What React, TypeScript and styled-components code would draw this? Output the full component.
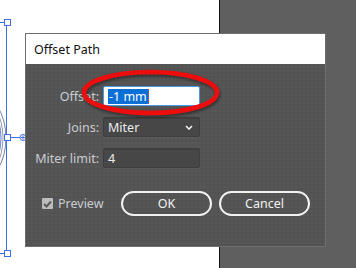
import React from "react";
import styled, { createGlobalStyle } from "styled-components";

const Global = createGlobalStyle`
  html, body { margin: 0; padding: 0; }
  body { width: 356px; height: 268px; overflow: hidden; font-family: "Noto Sans", "Liberation Sans", sans-serif; }
`;

const Stage = styled.div`
  position: relative;
  width: 356px;
  height: 268px;
  display: grid;
  grid-template-columns: 219px 1px 1fr;
  overflow: hidden;
`;

const Artboard = styled.div`
  background: #ffffff;
`;
const ArtEdge = styled.div`
  background: #111111;
`;
const Pasteboard = styled.div`
  background: #5f5f5f;
`;

const Art = styled.svg`
  position: absolute;
  left: 0;
  top: 0;
`;

const Dialog = styled.div`
  position: absolute;
  left: 25px;
  top: 33px;
  width: 299px;
  height: 212px;
  border: 1px solid #6e6e6e;
  display: flex;
  flex-direction: column;
`;

const TitleBar = styled.div`
  height: 30px;
  background: #ffffff;
  color: #111;
  font-size: 12.5px;
  display: flex;
  align-items: center;
  padding: 0 0 0 8px;
  border-bottom: 1px solid #555;
`;

const Body = styled.div`
  flex: 1;
  background-color: #535353;
  background-image: radial-gradient(circle, #595959 0.7px, transparent 0.8px);
  background-size: 4px 4px;
  display: flex;
  flex-direction: column;
  padding: 21px 15px 0 16px;
`;

const Form = styled.div`
  display: grid;
  grid-template-columns: 57px 97px;
  grid-auto-rows: 20px;
  column-gap: 4px;
  row-gap: 11px;
  align-items: center;
`;

const Label = styled.label`
  justify-self: end;
  color: #c9ccd2;
  font-size: 12.5px;
  white-space: nowrap;
`;

const Field = styled.div<{ $focused?: boolean }>`
  height: 20px;
  box-sizing: border-box;
  display: flex;
  align-items: center;
  justify-content: space-between;
  padding: 0 6px 0 4px;
  font-size: 12.5px;
  color: #ececec;
  background: ${(p) => (p.$focused ? "#ffffff" : "#474747")};
  border: 1px solid ${(p) => (p.$focused ? "#4a98e8" : "#3e3e3e")};
  border-radius: 2px;
  box-shadow: ${(p) => (p.$focused ? "none" : "inset 0 1px 0 #3f3f3f, 0 1px 0 #5a5a5a")};
`;

const Selected = styled.span`
  background: #0a6fd6;
  color: #ffffff;
  padding: 0 1px;
  line-height: 15px;
  border-right: 1px dotted #ff3b3b;
`;

const Footer = styled.div`
  margin-top: 23px;
  display: flex;
  align-items: center;
`;

const Check = styled.label`
  display: flex;
  align-items: center;
  gap: 5px;
  color: #c9ccd2;
  font-size: 12.5px;
`;

const Box = styled.span`
  width: 11px;
  height: 11px;
  border-radius: 1px;
  background: #bdbdbd;
  display: inline-flex;
  align-items: center;
  justify-content: center;
`;

const Buttons = styled.div`
  display: flex;
  gap: 7px;
  margin-left: auto;
`;

const Button = styled.button`
  width: 91px;
  height: 25px;
  border-radius: 13px;
  border: 2px solid #f2f2f2;
  background: transparent;
  color: #f2f2f2;
  font-family: "Noto Sans", "Liberation Sans", sans-serif;
  font-size: 12.5px;
  padding: 0;
`;

const Mark = styled.svg`
  position: absolute;
  left: 0;
  top: 0;
  pointer-events: none;
`;

export default function App() {
  return (
    <>
      <Global />
      <Stage>
        <Artboard />
        <ArtEdge />
        <Pasteboard />
        <Art width="60" height="268" viewBox="0 0 60 268">
          <g fill="none" strokeWidth="1">
            <ellipse cx="-22" cy="138" rx="28" ry="44" stroke="#7080b0" />
            <ellipse cx="-22" cy="138" rx="25" ry="41" stroke="#9a9aa4" />
            <ellipse cx="-22" cy="138" rx="23" ry="38" stroke="#5d7bd8" />
          </g>
          <g stroke="#3d6fe8" strokeWidth="1" fill="none">
            <line x1="6.5" y1="22" x2="6.5" y2="253" />
            <line x1="0" y1="22.5" x2="5" y2="22.5" />
            <line x1="10" y1="137.5" x2="20" y2="137.5" />
            <line x1="0" y1="253.5" x2="4" y2="253.5" />
            <rect x="4.5" y="19.5" width="6" height="6" fill="#fff" />
            <rect x="4.5" y="134.5" width="6" height="6" fill="#fff" />
            <rect x="4.5" y="250.5" width="6" height="6" fill="#fff" />
            <circle cx="23" cy="137.5" r="3" fill="#fff" />
            <line x1="21" y1="137.5" x2="25" y2="137.5" />
            <line x1="23" y1="135.5" x2="23" y2="139.5" />
          </g>
        </Art>
        <Dialog>
          <TitleBar>Offset Path</TitleBar>
          <Body>
            <Form>
              <Label>Offset:</Label>
              <Field $focused>
                <Selected>-1 mm</Selected>
              </Field>
              <Label>Joins:</Label>
              <Field>
                <span>Miter</span>
                <svg width="8" height="5" viewBox="0 0 8 5">
                  <path d="M1 1 L4 4 L7 1" stroke="#f0f0f0" strokeWidth="1.6" fill="none" />
                </svg>
              </Field>
              <Label>Miter limit:</Label>
              <Field>
                <span>4</span>
              </Field>
            </Form>
            <Footer>
              <Check>
                <Box>
                  <svg width="9" height="8" viewBox="0 0 9 8">
                    <path d="M1 4 L3.5 6.5 L8 1.5" stroke="#5a5a5a" strokeWidth="2" fill="none" />
                  </svg>
                </Box>
                Preview
              </Check>
              <Buttons>
                <Button>OK</Button>
                <Button>Cancel</Button>
              </Buttons>
            </Footer>
          </Body>
        </Dialog>
        <Mark width="356" height="268" viewBox="0 0 356 268">
          <defs>
            <filter id="sh" x="-20%" y="-40%" width="140%" height="180%">
              <feDropShadow dx="1" dy="2" stdDeviation="1.5" floodColor="#000" floodOpacity="0.45" />
            </filter>
          </defs>
          <ellipse cx="150.5" cy="92.5" rx="66.5" ry="20.5" fill="none" stroke="#ee0a0a" strokeWidth="4.5" filter="url(#sh)" />
        </Mark>
      </Stage>
    </>
  );
}
